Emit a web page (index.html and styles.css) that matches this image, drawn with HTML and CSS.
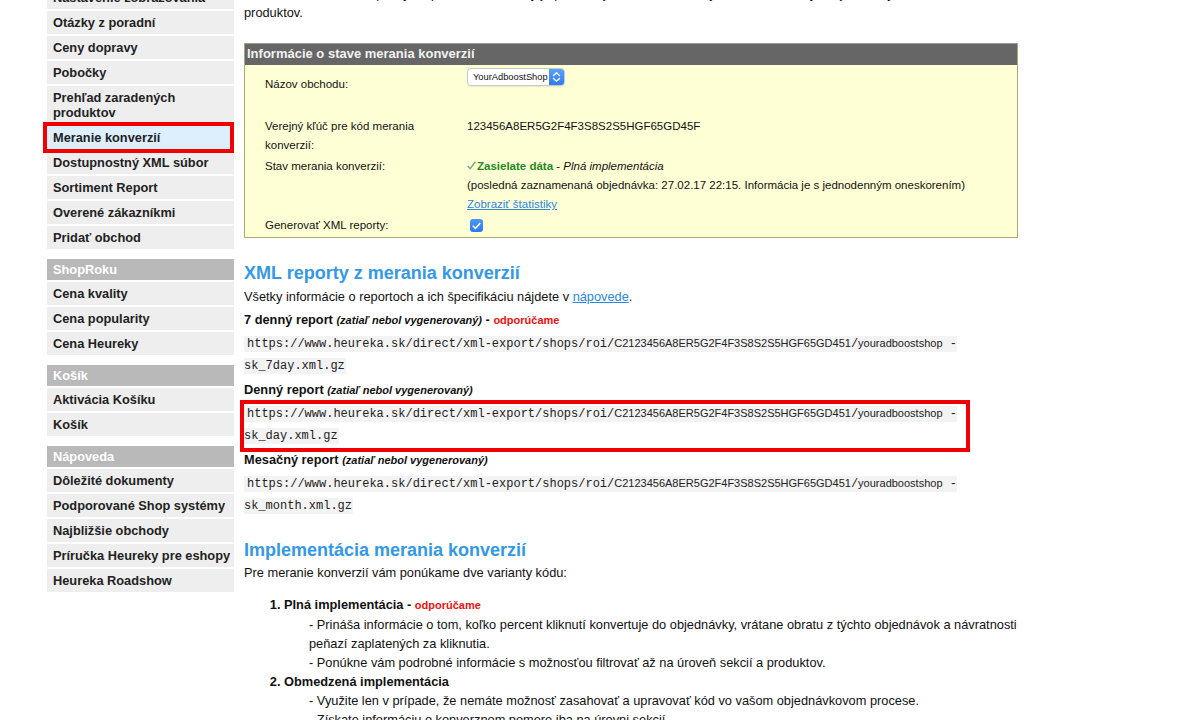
FILE: index.html
```html
<!DOCTYPE html>
<html lang="sk">
<head>
<meta charset="utf-8">
<title>Meranie konverzií</title>
<link rel="stylesheet" href="styles.css">
</head>
<body>
<div class="page">
  <aside class="sidebar">
    <ul class="menu">
      <li><a href="#">Nastavenie zobrazovania</a></li>
      <li><a href="#">Otázky z poradní</a></li>
      <li><a href="#">Ceny dopravy</a></li>
      <li><a href="#">Pobočky</a></li>
      <li><a href="#">Prehľad zaradených produktov</a></li>
      <li class="active"><a href="#">Meranie konverzií</a></li>
      <li><a href="#">Dostupnostný XML súbor</a></li>
      <li><a href="#">Sortiment Report</a></li>
      <li><a href="#">Overené zákazníkmi</a></li>
      <li><a href="#">Pridať obchod</a></li>
    </ul>
    <div class="menu-group">
      <div class="menu-title">ShopRoku</div>
      <ul class="menu">
        <li><a href="#">Cena kvality</a></li>
        <li><a href="#">Cena popularity</a></li>
        <li><a href="#">Cena Heureky</a></li>
      </ul>
    </div>
    <div class="menu-group">
      <div class="menu-title">Košík</div>
      <ul class="menu">
        <li><a href="#">Aktivácia Košíku</a></li>
        <li><a href="#">Košík</a></li>
      </ul>
    </div>
    <div class="menu-group">
      <div class="menu-title">Nápoveda</div>
      <ul class="menu">
        <li><a href="#">Dôležité dokumenty</a></li>
        <li><a href="#">Podporované Shop systémy</a></li>
        <li><a href="#">Najbližšie obchody</a></li>
        <li><a href="#">Príručka Heureky pre eshopy</a></li>
        <li><a href="#">Heureka Roadshow</a></li>
      </ul>
    </div>
  </aside>

  <main class="content">
    <p class="intro">Meranie konverzií vám poskytne prehľad o tom, aký je počet objednávok z Heureky a ako sa mení výkon jednotlivých sekcií a<br>produktov.</p>

    <section class="info-box">
      <div class="info-head">Informácie o stave merania konverzií</div>
      <div class="info-body">
        <div class="info-row row-shop">
          <div class="info-label">Názov obchodu:</div>
          <div class="info-value">
            <div class="select">
              <span class="select-text">YourAdboostShop</span>
              <span class="select-arrow">
                <svg width="9" height="12" viewBox="0 0 9 12"><path d="M1.5 4.5 L4.5 1.8 L7.5 4.5 M1.5 7.5 L4.5 10.2 L7.5 7.5" fill="none" stroke="#fff" stroke-width="1.4" stroke-linecap="round" stroke-linejoin="round"/></svg>
              </span>
            </div>
          </div>
        </div>
        <div class="info-row">
          <div class="info-label">Verejný kľúč pre kód merania konverzií:</div>
          <div class="info-value">123456A8ER5G2F4F3S8S2S5HGF65GD45F</div>
        </div>
        <div class="info-row">
          <div class="info-label">Stav merania konverzií:</div>
          <div class="info-value">
            <div><svg class="ok-icon" width="9" height="9" viewBox="0 0 9 9"><path d="M0.8 5 L3.2 7.6 L8.4 0.8" fill="none" stroke="#7ca57c" stroke-width="1.4"/></svg><strong class="ok">Zasielate dáta</strong> - <em>Plná implementácia</em></div>
            <div>(posledná zaznamenaná objednávka: 27.02.17 22:15. Informácia je s jednodenným oneskorením)</div>
            <div><a href="#" class="link">Zobraziť štatistiky</a></div>
          </div>
        </div>
        <div class="info-row">
          <div class="info-label">Generovať XML reporty:</div>
          <div class="info-value">
            <span class="checkbox"><svg width="9" height="8" viewBox="0 0 9 8"><path d="M1.2 4.2 L3.5 6.4 L7.8 1.4" fill="none" stroke="#fff" stroke-width="1.6" stroke-linecap="round" stroke-linejoin="round"/></svg></span>
          </div>
        </div>
      </div>
    </section>

    <h2 class="section-title">XML reporty z merania konverzií</h2>
    <p class="lead">Všetky informácie o reportoch a ich špecifikáciu nájdete v <a href="#" class="link">nápovede</a>.</p>

    <h3 class="report-title">7 denný report <em class="note">(zatiaľ nebol vygenerovaný)</em> - <span class="recommend">odporúčame</span></h3>
    <p class="url"><code>https://www.heureka.sk/direct/xml-export/shops/roi/<span class="key">C2123456A8ER5G2F4F3S8S2S5HGF65GD451</span>/<span class="key">youradboostshop</span> -<br>sk_7day.xml.gz</code></p>

    <div class="highlighted">
      <h3 class="report-title">Denný report <em class="note">(zatiaľ nebol vygenerovaný)</em></h3>
      <p class="url marked"><code>https://www.heureka.sk/direct/xml-export/shops/roi/<span class="key">C2123456A8ER5G2F4F3S8S2S5HGF65GD451</span>/<span class="key">youradboostshop</span> -<br>sk_day.xml.gz</code></p>
    </div>

    <h3 class="report-title">Mesačný report <em class="note">(zatiaľ nebol vygenerovaný)</em></h3>
    <p class="url"><code>https://www.heureka.sk/direct/xml-export/shops/roi/<span class="key">C2123456A8ER5G2F4F3S8S2S5HGF65GD451</span>/<span class="key">youradboostshop</span> -<br>sk_month.xml.gz</code></p>

    <h2 class="section-title second">Implementácia merania konverzií</h2>
    <p class="lead">Pre meranie konverzií vám ponúkame dve varianty kódu:</p>

    <ol class="impl-list">
      <li>
        <strong>Plná implementácia - <span class="recommend">odporúčame</span></strong>
        <div class="impl-desc">- Prináša informácie o tom, koľko percent kliknutí konvertuje do objednávky, vrátane obratu z týchto objednávok a návratnosti peňazí zaplatených za kliknutia.</div>
        <div class="impl-desc">- Ponúkne vám podrobné informácie s možnosťou filtrovať až na úroveň sekcií a produktov.</div>
      </li>
      <li>
        <strong>Obmedzená implementácia</strong>
        <div class="impl-desc">- Využite len v prípade, že nemáte možnosť zasahovať a upravovať kód vo vašom objednávkovom procese.</div>
        <div class="impl-desc">- Získate informáciu o konverznom pomere iba na úrovni sekcií.</div>
      </li>
    </ol>
  </main>
</div>
</body>
</html>
```
FILE: styles.css
```css
html, body {
  margin: 0;
  padding: 0;
  background: #fff;
}

body {
  font-family: "Liberation Sans", Arial, Helvetica, sans-serif;
  color: #111;
  overflow: hidden;
}

.page {
  display: flex;
  gap: 10px;
  margin-top: -16px;
  padding-left: 47px;
}

/* ---------- sidebar ---------- */
.sidebar {
  width: 187px;
  flex: none;
  padding-top: 2px;
}

.menu {
  list-style: none;
  margin: 0;
  padding: 0;
  display: flex;
  flex-direction: column;
  gap: 2px;
}

.menu a {
  display: block;
  background: #eeeeee;
  padding: 4px 2px 4px 6px;
  font-size: 12.8px;
  line-height: 15px;
  font-weight: bold;
  color: #222;
  text-decoration: none;
}

.menu .active {
  position: relative;
}

.menu .active a {
  background: #ddeffc;
}

.menu .active::after {
  content: "";
  position: absolute;
  left: -4px;
  right: 0;
  top: -4px;
  bottom: -4px;
  border: 4px solid #f00000;
  pointer-events: none;
}

.menu-group {
  margin-top: 10px;
  display: flex;
  flex-direction: column;
  gap: 2px;
}

.menu-title {
  background: #b9b9b9;
  color: #fff;
  font-size: 12.8px;
  line-height: 15px;
  font-weight: bold;
  padding: 3px 6px;
}

/* ---------- content ---------- */
.content {
  width: 782px;
  flex: none;
  font-size: 12.8px;
  line-height: 19px;
  color: #111;
}

.intro {
  margin: 0;
}

.link {
  color: #2b87e3;
  text-decoration: underline;
}

/* info box */
.info-box {
  margin-top: 21px;
  width: 772px;
  border: 1px solid #aba977;
  background: #ffffd5;
}

.info-head {
  background: #666666;
  border-top: 1px solid #9a9a9a;
  margin-top: -1px;
  color: #f2f2f2;
  font-size: 13px;
  font-weight: bold;
  line-height: 20px;
  height: 21px;
  padding-left: 2px;
}

.info-body {
  padding: 0 0 1px 20px;
  font-size: 11.5px;
  line-height: 19px;
}

.info-row {
  display: grid;
  grid-template-columns: 170px 1fr;
  column-gap: 32px;
  padding: 1px 0;
}

.row-shop {
  height: 51px;
  padding: 0;
  box-sizing: border-box;
}

.row-shop .info-label {
  padding-top: 10px;
}

.row-shop .info-value {
  padding-top: 3px;
}

.select {
  display: inline-flex;
  align-items: stretch;
  width: 98px;
  height: 18px;
  box-sizing: border-box;
  border: 1px solid #c9c9c9;
  border-radius: 4px;
  background: #fff;
  font-size: 9.3px;
  line-height: 16px;
  overflow: hidden;
  vertical-align: top;
  box-shadow: 0 1px 1px rgba(0, 0, 0, 0.08);
}

.select-text {
  flex: 1;
  min-width: 0;
  padding-left: 5px;
  white-space: nowrap;
  overflow: hidden;
  color: #111;
}

.select-arrow {
  width: 15px;
  flex: none;
  display: flex;
  align-items: center;
  justify-content: center;
  background: linear-gradient(#5aa2fb, #2b7cf0);
}

.ok-icon {
  margin-right: 1px;
  vertical-align: 0;
}

.ok {
  color: #1d8a24;
  font-weight: bold;
}

.checkbox {
  display: inline-flex;
  align-items: center;
  justify-content: center;
  width: 13px;
  height: 13px;
  margin: 3px 0 0 3px;
  border-radius: 3px;
  background: linear-gradient(#4c97f8, #2a79ee);
  vertical-align: top;
}

/* section headings */
.section-title {
  margin: 24px 0 3px;
  font-size: 18px;
  line-height: 22px;
  font-weight: bold;
  color: #3399e6;
}

.section-title.second {
  margin-top: 23px;
  margin-bottom: 2px;
}

.lead {
  margin: 0;
}

.report-title {
  margin: 4px 0 0;
  font-size: 12.8px;
  line-height: 19px;
  font-weight: bold;
  color: #111;
}

.note {
  font-size: 11px;
  font-weight: bold;
  font-style: italic;
}

.recommend {
  color: #ee0f0f;
  font-size: 11px;
  font-weight: bold;
}

.url {
  margin: 3px 0 -1px;
  font-family: "Liberation Mono", "Courier New", monospace;
  font-size: 12px;
  line-height: 22px;
}

.url code {
  font-family: inherit;
  font-size: inherit;
  background: #f3f3f3;
  padding: 1px 1px 1px 3px;
  color: #222;
}

.url .key {
  font-family: "Liberation Sans", Arial, sans-serif;
  font-size: 11px;
  line-height: 1;
}

.highlighted {
  position: relative;
}

.url.marked {
  position: relative;
}

.url.marked::after {
  content: "";
  position: absolute;
  left: -4px;
  top: -3px;
  width: 730px;
  height: 52px;
  box-sizing: border-box;
  border: 4px solid #f00000;
  pointer-events: none;
}

/* implementation list */
.impl-list {
  margin: 13px 0 0;
  padding-left: 40px;
}

.impl-list li::marker {
  font-weight: bold;
}

.impl-desc {
  padding-left: 25px;
}
```
